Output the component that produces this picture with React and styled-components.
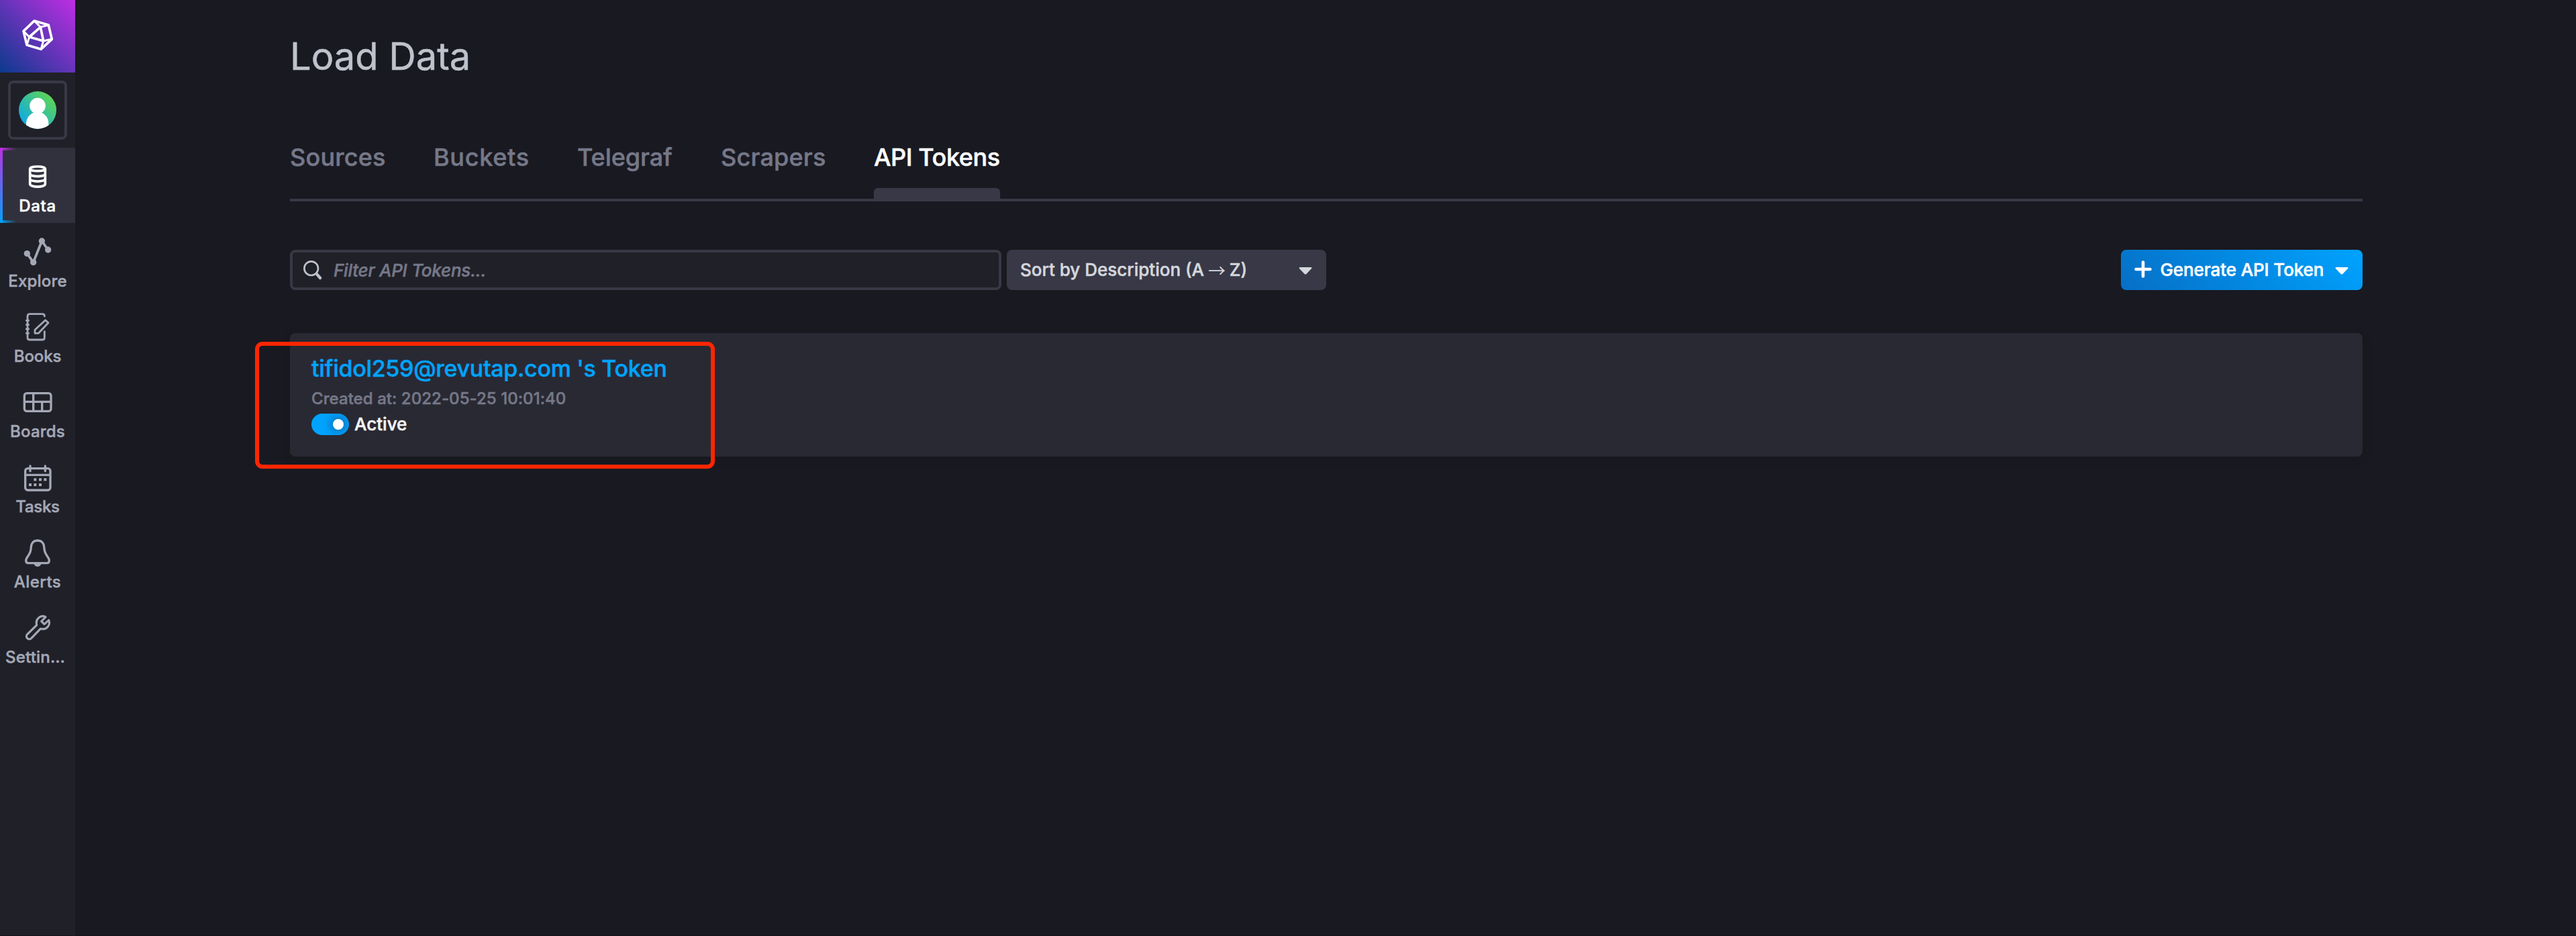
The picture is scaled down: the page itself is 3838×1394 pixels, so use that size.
import React from "react";
import styled, { createGlobalStyle, css } from "styled-components";

const color = {
  page: "#191921",
  sidebar: "#202028",
  active: "#31313d",
  border: "#383846",
  card: "#292933",
  muted: "#757888",
  icon: "#a4a8b6",
  title: "#bec2cc",
  control: "#d4d7dd",
  blue: "#00a3ff",
  magenta: "#be2ee4",
  mark: "#ff2600",
};

const GlobalStyle = createGlobalStyle`
  * { box-sizing: border-box; }
  body {
    margin: 0;
    background: ${color.page};
    font-family: Inter, "Liberation Sans", sans-serif;
    font-weight: 500;
    -webkit-text-stroke: 0.5px currentColor;
  }
  button, input { font: inherit; -webkit-text-stroke: inherit; }
`;

const Shell = styled.div`
  display: flex;
  height: 100vh;
  min-height: 1394px;
  background: ${color.page};
  border-bottom: 1px solid #16131a;
`;

/* ---------- sidebar ---------- */

const Sidebar = styled.nav`
  display: flex;
  flex-direction: column;
  flex: none;
  width: 112px;
  background: ${color.sidebar};
`;

const Logo = styled.div`
  display: flex;
  align-items: center;
  justify-content: center;
  height: 108px;
  padding-bottom: 4px;
  background: linear-gradient(45deg, #0b3a8d 0%, ${color.magenta} 100%);
`;

const AvatarFrame = styled.div`
  display: flex;
  align-items: center;
  justify-content: center;
  width: 88px;
  height: 88px;
  margin: 12px;
  border: 4px solid ${color.border};
  border-radius: 8px;
`;

const NavItem = styled.a`
  display: flex;
  flex-direction: column;
  align-items: center;
  height: 112px;
  padding: 14px 8px 0;
  color: ${(p) => (p.$active ? "#fff" : color.icon)};
  ${(p) =>
    p.$active &&
    css`
      background: linear-gradient(${color.magenta}, ${color.blue}) left / 4px 100% no-repeat,
        linear-gradient(90deg, ${color.magenta}, rgba(190, 46, 228, 0)) left top / 24px 4px no-repeat,
        linear-gradient(90deg, ${color.blue}, rgba(0, 163, 255, 0)) left bottom / 24px 4px no-repeat,
        ${color.active};
    `}
`;

const NavLabel = styled.span`
  align-self: ${(p) => (p.$clipped ? "flex-start" : "center")};
  margin-top: 1px;
  font-size: 24px;
  line-height: 24px;
  letter-spacing: ${(p) => p.$track}px;
  white-space: nowrap;
`;

const NavIcon = styled.svg`
  display: block;
  flex: none;
  width: 60px;
  height: 60px;
  fill: none;
  stroke: currentColor;
  stroke-width: 10;
  stroke-linecap: round;
  stroke-linejoin: round;

  .solid {
    fill: currentColor;
    stroke: none;
  }
  .thin {
    stroke-width: 8.5;
  }
`;

/* ---------- main ---------- */

const Main = styled.main`
  display: flex;
  flex-direction: column;
  flex: 1;
  padding: 50px 318px 0 320px;
`;

const Title = styled.h1`
  margin: 0;
  font-size: 56px;
  font-weight: 400;
  line-height: 68px;
  color: ${color.title};
`;

const Tabs = styled.div`
  display: flex;
  gap: 72px;
  height: 88px;
  margin-top: 94px;
  border-bottom: 4px solid ${color.border};
`;

const Tab = styled.a`
  display: flex;
  flex-direction: column;
  justify-content: space-between;
  width: ${(p) => p.$width}px;
  font-size: 36px;
  line-height: 44px;
  letter-spacing: ${(p) => p.$track}px;
  white-space: nowrap;
  color: ${(p) => (p.$active ? "#fff" : color.muted)};
`;

const TabMarker = styled.span`
  height: 16px;
  border-radius: 6px 6px 0 0;
  background: ${color.border};
`;

const Toolbar = styled.div`
  display: flex;
  gap: 8px;
  height: 60px;
  margin-top: 72px;
  font-size: 26px;
`;

const Filter = styled.label`
  display: flex;
  align-items: center;
  width: 1060px;
  padding-left: 16px;
  border: 4px solid ${color.border};
  border-radius: 8px;
  background: ${color.sidebar};
`;

const FilterInput = styled.input`
  flex: 1;
  height: 52px;
  margin-left: 17px;
  padding: 0;
  border: 0;
  outline: 0;
  background: transparent;
  font-style: italic;
  letter-spacing: -0.23px;
  color: ${color.control};

  &::placeholder {
    color: ${color.muted};
    opacity: 1;
  }
`;

const Control = styled.button`
  display: flex;
  align-items: center;
  height: 60px;
  padding: 0 20px 2px;
  border: 0;
  border-radius: 8px;
  white-space: nowrap;
`;

const SortControl = styled(Control)`
  justify-content: space-between;
  width: 476px;
  background: ${color.border};
  color: ${color.control};
`;

const GenerateButton = styled(Control)`
  width: 360px;
  margin-left: auto;
  background: linear-gradient(45deg, #066fc5 0%, ${color.blue} 100%);
  letter-spacing: -0.11px;
  color: #fff;
`;

const ButtonLabel = styled.span`
  flex: 1;
  margin-left: 12.5px;
  text-align: left;
`;

const Arrow = styled.span`
  margin: 0 -1px;
  font-family: "Noto Sans CJK SC", "DejaVu Sans", sans-serif;
  font-size: 26px;
  font-weight: 400;
  line-height: 0;
  vertical-align: -2px;
  -webkit-text-stroke: 0;
`;

const Caret = styled.svg`
  flex: none;
  width: 20px;
  height: 12px;
  margin: 4px 1.5px 0 0;
  fill: currentColor;
`;

const TokenCard = styled.section`
  position: relative;
  display: flex;
  flex-direction: column;
  height: 184px;
  margin-top: 64px;
  padding: 32px;
  border-radius: 8px;
  background: ${color.card};
  box-shadow: 0 4px 12px rgba(18, 18, 20, 0.25);
`;

const TokenName = styled.a`
  font-size: 34px;
  line-height: 41px;
  letter-spacing: -0.3px;
  color: ${color.blue};
`;

const TokenMeta = styled.span`
  margin-top: 11px;
  font-size: 24px;
  line-height: 28px;
  letter-spacing: 0.06px;
  color: ${color.muted};
`;

const StatusRow = styled.div`
  display: flex;
  align-items: center;
  gap: 8px;
  height: 32px;
  margin-top: 8px;
  font-size: 26px;
  line-height: 32px;
  color: #f6f6f8;
`;

const Toggle = styled.span`
  display: flex;
  align-items: center;
  justify-content: flex-end;
  width: 56px;
  height: 32px;
  padding-right: 8px;
  border-radius: 16px;
  overflow: hidden;
  background: ${color.blue};
`;

const Knob = styled.span`
  width: 16px;
  height: 16px;
  border-radius: 50%;
  background: #fff;
  box-shadow: 0 0 14px 3px rgba(19, 20, 40, 0.4);
`;

const Highlight = styled.div`
  position: absolute;
  left: -52px;
  top: 13px;
  width: 685px;
  height: 189px;
  border: 6px solid ${color.mark};
  border-radius: 11px;
  pointer-events: none;
`;

/* ---------- icon drawings ---------- */

const glyphs = {
  data: (
    <g strokeWidth="11">
      <ellipse cx="168" cy="94" rx="34" ry="10" />
      <path d="M134 94V163C134 169 149 174.500 168 174.500S202 169 202 163V94" />
      <path d="M134 118C134 123 149 128 168 128S202 123 202 118" />
      <path d="M134 140C134 145.500 149 150.500 168 150.500S202 145.500 202 140" />
    </g>
  ),
  explore: (
    <g>
      <path d="M121 137L149 176L187 81L215 120" strokeWidth="11" />
      <g className="solid">
        <circle cx="121" cy="137" r="14" />
        <circle cx="149" cy="176" r="14" />
        <circle cx="187" cy="81" r="14" />
        <circle cx="215" cy="120" r="14" />
      </g>
    </g>
  ),
  books: (
    <g className="thin">
      <path d="M199 81V80Q199 71 189 71H133Q123 71 123 81V176Q123 186 133 186H189Q199 186 199 176V149" />
      <path d="M118 100H128M118 119H128M118 138H128M118 157H128" />
      <path d="M203 98L216 110L172 157H156V142Z" />
    </g>
  ),
  boards: (
    <g>
      <rect x="109" y="89" width="119" height="80" rx="11" />
      <path d="M109 127H228M149 89V169M188 127V169" strokeLinecap="butt" />
    </g>
  ),
  tasks: (
    <g>
      <rect x="113" y="89" width="112" height="97" rx="11" />
      <path d="M113 118H225" strokeLinecap="butt" />
      <path d="M135 78V101M202 78V101" />
      <path
        className="solid"
        d="M151 133h12v12h-12zM174 133h12v12h-12zM196 133h12v12h-12zM129 156h12v12h-12zM151 156h12v12h-12zM174 156h12v12h-12z"
      />
    </g>
  ),
  alerts: (
    <g>
      <path d="M168 75C150 75 140 87 139 103C138 125 133 133 123 148C118 155 116 160 116 165Q116 176 127 176H209Q220 176 220 165C220 160 218 155 213 148C203 133 198 125 197 103C196 87 186 75 168 75Z" />
      <path className="solid" d="M152 177A16 15 0 0 0 184 177Z" />
    </g>
  ),
  settings: (
    <path
      strokeWidth="9.500"
      d="M204 81C181 69 157 90 164 117L122 158A12.500 12.500 0 0 0 140 176L181 133C207 141 227 118 218 95L198 113L185 100Z"
    />
  ),
};

const navItems = [
  { icon: "data", label: "Data", track: 0.6, active: true },
  { icon: "explore", label: "Explore", track: 0.2 },
  { icon: "books", label: "Books", track: -0.12 },
  { icon: "boards", label: "Boards", track: 0.18 },
  { icon: "tasks", label: "Tasks", track: -0.3 },
  { icon: "alerts", label: "Alerts", track: 0.44 },
  { icon: "settings", label: "Settin…", track: 0.2, clipped: true },
];

const tabs = [
  { label: "Sources", width: 142, track: 0.2 },
  { label: "Buckets", width: 142, track: 0.7 },
  { label: "Telegraf", width: 142, track: -0.08 },
  { label: "Scrapers", width: 156, track: 0.2 },
  { label: "API Tokens", width: 188, track: -0.42, active: true },
];

function LogoMark() {
  return (
    <svg width="48" height="48" viewBox="96 82 144 144" fill="none" stroke="#fff" strokeWidth="11" strokeLinejoin="round">
      <path d="M153 91L217 110L232 173L183 218L120 199L105 137Z" />
      <path d="M181 119L194 181L131 163Z" />
      <path d="M153 91L181 119L217 110M232 173L194 181L183 218M120 199L131 163L105 137" strokeWidth="9" />
    </svg>
  );
}

function Avatar() {
  return (
    <svg width="56" height="56" viewBox="84 408 168 168">
      <defs>
        <linearGradient id="avatar-fill" x1="0" y1="1" x2="1" y2="0">
          <stop offset="0" stopColor="#00a3ff" />
          <stop offset="1" stopColor="#6cdc3c" />
        </linearGradient>
        <clipPath id="avatar-clip">
          <circle cx="168" cy="492" r="84" />
        </clipPath>
      </defs>
      <g clipPath="url(#avatar-clip)">
        <rect x="84" y="408" width="168" height="168" fill="url(#avatar-fill)" />
        <circle cx="168" cy="473" r="35.500" fill="#fff" />
        <path d="M117 576V552C117 524 138 501 168 501S217 524 217 552V576Z" fill="#fff" />
      </g>
    </svg>
  );
}

function DownCaret() {
  return (
    <Caret viewBox="0 0 60 36">
      <path d="M5 3H55Q60 4 57 9L35 32Q30 37 25 32L3 9Q0 4 5 3Z" />
    </Caret>
  );
}

export default function App() {
  return (
    <>
      <GlobalStyle />
      <Shell>
        <Sidebar>
          <Logo>
            <LogoMark />
          </Logo>
          <AvatarFrame>
            <Avatar />
          </AvatarFrame>
          {navItems.map((item) => (
            <NavItem key={item.icon} $active={item.active}>
              <NavIcon viewBox="78 42 180 180">{glyphs[item.icon]}</NavIcon>
              <NavLabel $track={item.track} $clipped={item.clipped}>
                {item.label}
              </NavLabel>
            </NavItem>
          ))}
        </Sidebar>

        <Main>
          <Title>Load Data</Title>
          <Tabs>
            {tabs.map((tab) => (
              <Tab key={tab.label} $width={tab.width} $track={tab.track} $active={tab.active}>
                {tab.label}
                {tab.active && <TabMarker />}
              </Tab>
            ))}
          </Tabs>

          <Toolbar>
            <Filter>
              <svg width="28" height="30" viewBox="0 0 84 90" fill="none" stroke={color.title} strokeLinecap="round">
                <circle cx="35" cy="38" r="31" strokeWidth="8" />
                <path d="M61 65L75 81" strokeWidth="13" />
              </svg>
              <FilterInput placeholder="Filter API Tokens..." />
            </Filter>
            <SortControl>
              <span>
                Sort by Description (A <Arrow>→</Arrow> Z)
              </span>
              <DownCaret />
            </SortControl>
            <GenerateButton>
              <svg width="26" height="26" viewBox="0 0 26 26" stroke="#fff" strokeWidth="4.600" strokeLinecap="round">
                <path d="M13 2.500V23.500M2.500 13H23.500" />
              </svg>
              <ButtonLabel>Generate API Token</ButtonLabel>
              <DownCaret />
            </GenerateButton>
          </Toolbar>

          <TokenCard>
            <TokenName>tifidol259@revutap.com 's Token</TokenName>
            <TokenMeta>Created at: 2022-05-25 10:01:40</TokenMeta>
            <StatusRow>
              <Toggle>
                <Knob />
              </Toggle>
              Active
            </StatusRow>
            <Highlight />
          </TokenCard>
        </Main>
      </Shell>
    </>
  );
}
